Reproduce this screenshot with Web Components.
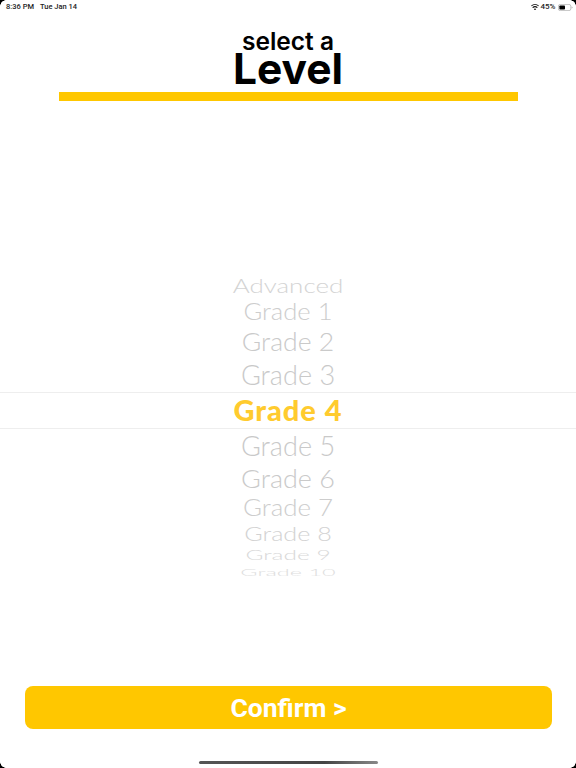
<!DOCTYPE html>
<html lang="en">
<head>
<meta charset="utf-8">
<title>Select a Level</title>
<style>
html,body{margin:0;padding:0;background:#fff}
</style>
</head>
<body>
<level-screen>
  <status-bar slot="status"></status-bar>
  <app-title slot="title" small="select a" large="Level"></app-title>
  <wheel-picker slot="picker">
    <wheel-item h="24.5" sy=".72" o=".8" size="26">Advanced</wheel-item>
    <wheel-item h="28.5" sy=".9" o=".92" size="25.6">Grade 1</wheel-item>
    <wheel-item h="30.5" sy=".97" o=".98" size="26.6">Grade 2</wheel-item>
    <wheel-item h="35" sy="1" o="1" size="27.1">Grade 3</wheel-item>
    <wheel-item h="37" selected size="29">Grade 4</wheel-item>
    <wheel-item h="32.5" sy="1" o="1" size="27.1">Grade 5</wheel-item>
    <wheel-item h="32" sy=".97" o=".98" size="27">Grade 6</wheel-item>
    <wheel-item h="28.5" sy=".9" o=".92" size="25.9">Grade 7</wheel-item>
    <wheel-item h="24" sy=".76" o=".82" size="25.2">Grade 8</wheel-item>
    <wheel-item h="19" sy=".58" o=".7" size="24.500">Grade 9</wheel-item>
    <wheel-item h="14.5" sy=".42" o=".6" size="23.500">Grade 10</wheel-item>
  </wheel-picker>
  <confirm-button slot="action">Confirm &gt;</confirm-button>
  <home-indicator slot="home"></home-indicator>
</level-screen>
<script>
function define(name, html, init){
  customElements.define(name, class extends HTMLElement{
    constructor(){
      super();
      this.attachShadow({mode:"open"}).innerHTML = html;
    }
    connectedCallback(){ if(init) init(this, this.shadowRoot); }
  });
}
define("level-screen", `<style>
:host{display:flex;flex-direction:column;position:relative;width:576px;height:768px;overflow:hidden;background:#fff;font-family:"Inter","Liberation Sans",sans-serif}
.picker{display:block;padding-top:172.5px}
.action{display:block;margin-top:106px}
.corner{position:absolute;width:6px;height:6px;background:radial-gradient(circle at var(--c),transparent 5.5px,#000 6px)}
.tl{left:0;top:0;--c:100% 100%}.tr{right:0;top:0;--c:0 100%}
.bl{left:0;bottom:0;--c:100% 0}.br{right:0;bottom:0;--c:0 0}
</style>
<slot name="status"></slot><slot name="title"></slot>
<div class="picker"><slot name="picker"></slot></div>
<div class="action"><slot name="action"></slot></div>
<slot name="home"></slot>
<i class="corner tl"></i><i class="corner tr"></i><i class="corner bl"></i><i class="corner br"></i>`);

define("status-bar", `<style>
:host{display:flex;justify-content:space-between;align-items:center;height:14px;padding:0 3.5px 0 6px;font:500 7.5px/14px "Roboto","Liberation Sans",sans-serif;color:#222}
.l{display:flex;gap:6px}.r{display:flex;align-items:center;gap:2px}
.pct{font-size:8px}
svg{display:block}
</style>
<div class="l"><span>8:36 PM</span><span>Tue Jan 14</span></div>
<div class="r">
<svg width="8" height="6.5" viewBox="0 0 18 14"><path fill="#111" d="M9 14 6.3 10.8a4 4 0 0 1 5.4 0zM4.6 8.9 2.8 6.8a9.2 9.2 0 0 1 12.4 0l-1.8 2.1a6.6 6.6 0 0 0-8.8 0zM1.2 5 0 3.4a13.5 13.5 0 0 1 18 0L16.800 5a11.700 11.700 0 0 0-15.600 0z"/></svg>
<span class="pct">45%</span>
<svg width="15" height="7" viewBox="0 0 15 7"><rect x=".4" y=".4" width="12.4" height="6.200" rx="1.800" fill="none" stroke="#aaa" stroke-width=".7"/><rect x="1.400" y="1.400" width="5.600" height="4.200" rx=".8" fill="#000"/><path d="M13.600 2.500c.7.200 1 .6 1 1s-.3.800-1 1z" fill="#aaa"/></svg>
</div>`);

define("app-title", `<style>
:host{display:flex;flex-direction:column;align-items:center;padding-top:17px;color:#000}
.s{font:600 24.5px/20px "Inter","Liberation Sans",sans-serif}
.b{font:700 42.5px/36px "Inter","Liberation Sans",sans-serif}
.rule{width:459px;height:9px;background:#ffc700;margin-top:5px;margin-left:1px}
</style><div class="s"></div><div class="b"></div><div class="rule"></div>`, (el, r)=>{
  r.querySelector(".s").textContent = el.getAttribute("small");
  r.querySelector(".b").textContent = el.getAttribute("large");
});

define("wheel-picker", `<style>
:host{display:flex;flex-direction:column;align-items:stretch}
</style><slot></slot>`);

define("wheel-item", `<style>
:host{display:flex;align-items:center;justify-content:center;box-sizing:border-box;color:#c9c9c9;font-family:"Lato","Liberation Sans",sans-serif;font-weight:300;white-space:nowrap;overflow:visible}
:host([selected]){color:#ffcb2e;font-weight:900;letter-spacing:1px;padding-bottom:3px;border-top:1px solid #eee;border-bottom:1px solid #eee}
span{display:block;line-height:1}
</style><span><slot></slot></span>`, (el, r)=>{
  el.style.height = el.getAttribute("h")+"px";
  const s = r.querySelector("span");
  s.style.fontSize = el.getAttribute("size")+"px";
  if(el.hasAttribute("sy")){
    s.style.transform = "scaleY("+el.getAttribute("sy")+")";
    el.style.opacity = el.getAttribute("o");
  }
});

define("confirm-button", `<style>
:host{display:flex;align-items:center;justify-content:center;height:43px;margin:0 24px 0 25px;border-radius:8px;background:#ffc700;color:#fff;font:700 26.5px/43px "Roboto","Liberation Sans",sans-serif}
</style><slot></slot>`);

define("home-indicator", `<style>
:host{display:block;width:179px;height:3px;margin:32px auto 0;border-radius:2px;background:linear-gradient(90deg,#555,#444 70%,#888)}
</style>`);
</script>
</body>
</html>
